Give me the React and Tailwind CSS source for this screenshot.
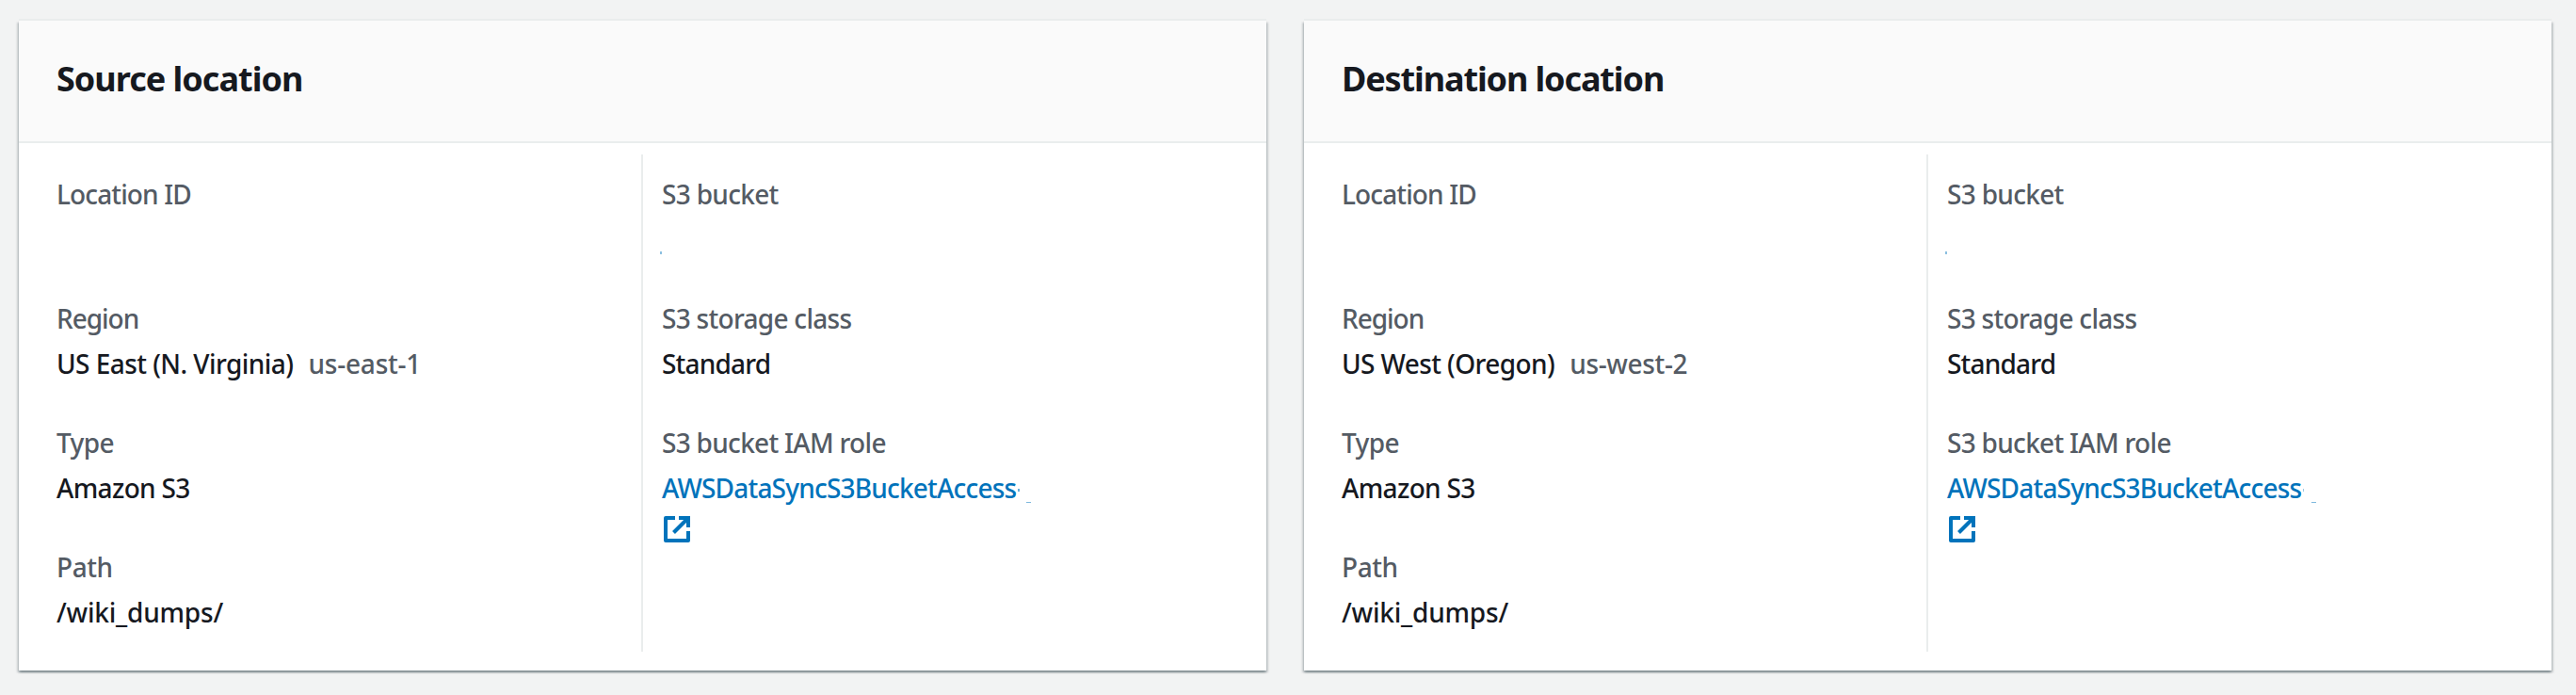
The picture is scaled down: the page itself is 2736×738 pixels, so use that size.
const EMPTY = <span>&nbsp;</span>;

function ExternalIcon() {
  return (
    <svg className="ml-[2px] block h-7 w-7" viewBox="0 0 28 28" fill="none" stroke="#0073bb" strokeWidth="4" aria-hidden="true">
      <path d="M12 2H2v24h24V16" strokeLinejoin="round" />
      <path d="M16 2h10v10" />
      <path d="M26 2 10.5 17.5" />
    </svg>
  );
}

function Field({ label, labelClass, children }) {
  return (
    <div className="flex flex-col gap-1">
      <dt className={`text-[#545b64] ${labelClass}`}>{label}</dt>
      <dd>{children}</dd>
    </div>
  );
}

function BucketField() {
  return (
    <Field label="S3 bucket" labelClass="tracking-[-0.69px]">
      <span className="relative block">
        {EMPTY}
        <span className="absolute top-[35px] left-[-2px] h-[3px] w-[2px] bg-[#0073bb]/45" />
      </span>
    </Field>
  );
}

function RoleField({ hyphenClass }) {
  return (
    <Field label="S3 bucket IAM role" labelClass="tracking-[-0.70px]">
      <a className="relative block text-[#0073bb]">
        <span className="tracking-[-0.80px]">AWSDataSyncS3BucketAccess</span>
        <span className={`absolute top-[23px] h-[3px] ${hyphenClass}`} />
        <span className="absolute top-[37px] left-[387px] h-px w-[5px] bg-[#0073bb]/50" />
      </a>
      <div className="pt-[8px]">
        <ExternalIcon />
      </div>
    </Field>
  );
}

function LocationCard({ title, titleClass, region, regionClass, code, codeClass, hyphenClass }) {
  return (
    <section className="h-[690px] w-[1325px] bg-white shadow-[0_-2px_0_0_#eaeded,0_2px_2px_0_rgba(0,28,36,0.3),2px_2px_2px_0_rgba(0,28,36,0.15),-2px_2px_2px_0_rgba(0,28,36,0.15)]">
      <header className="h-[130px] border-b-2 border-[#eaeded] bg-[#fafafa] px-10 pt-[40px]">
        <h2 className={`text-[36px] leading-[44px] font-bold ${titleClass}`}>{title}</h2>
      </header>
      <div className="flex pt-3">
        <dl className="flex h-[528px] w-[661px] flex-col gap-10 pt-5 pl-10">
          <Field label="Location ID" labelClass="tracking-[-0.88px]">{EMPTY}</Field>
          <Field label="Region" labelClass="tracking-[-1.02px]">
            <div className="flex gap-4">
              <span className={regionClass}>{region}</span>
              <span className={`text-[#545b64] ${codeClass}`}>{code}</span>
            </div>
          </Field>
          <Field label="Type" labelClass="tracking-[-0.61px]">
            <span className="tracking-[-0.65px]">Amazon S3</span>
          </Field>
          <Field label="Path" labelClass="tracking-[-0.44px]">
            <span className="tracking-[-0.21px]">/wiki_dumps/</span>
          </Field>
        </dl>
        <dl className="flex h-[528px] flex-col gap-10 border-l-2 border-[#eaeded] pt-5 pl-5">
          <BucketField />
          <Field label="S3 storage class" labelClass="tracking-[-0.71px]">
            <span className="tracking-[-0.81px]">Standard</span>
          </Field>
          <RoleField hyphenClass={hyphenClass} />
        </dl>
      </div>
    </section>
  );
}

export default function App() {
  return (
    <main className="flex h-[738px] w-[2736px] gap-10 overflow-hidden bg-[#f2f3f3] pt-[22px] pl-5 font-['Noto_Sans',sans-serif] text-[28px] leading-[44px] font-medium whitespace-nowrap text-[#16191f]">
      <LocationCard
        title="Source location"
        titleClass="tracking-[-0.99px]"
        region="US East (N. Virginia)"
        regionClass="tracking-[-0.55px]"
        code="us-east-1"
        codeClass="tracking-[-0.22px]"
        hyphenClass="left-[378px] w-[2px] bg-[#0073bb]/60"
      />
      <LocationCard
        title="Destination location"
        titleClass="tracking-[-1.12px]"
        region="US West (Oregon)"
        regionClass="tracking-[-0.59px]"
        code="us-west-2"
        codeClass="tracking-[-0.34px]"
        hyphenClass="left-[378px] w-px bg-[#0073bb]/40"
      />
    </main>
  );
}
